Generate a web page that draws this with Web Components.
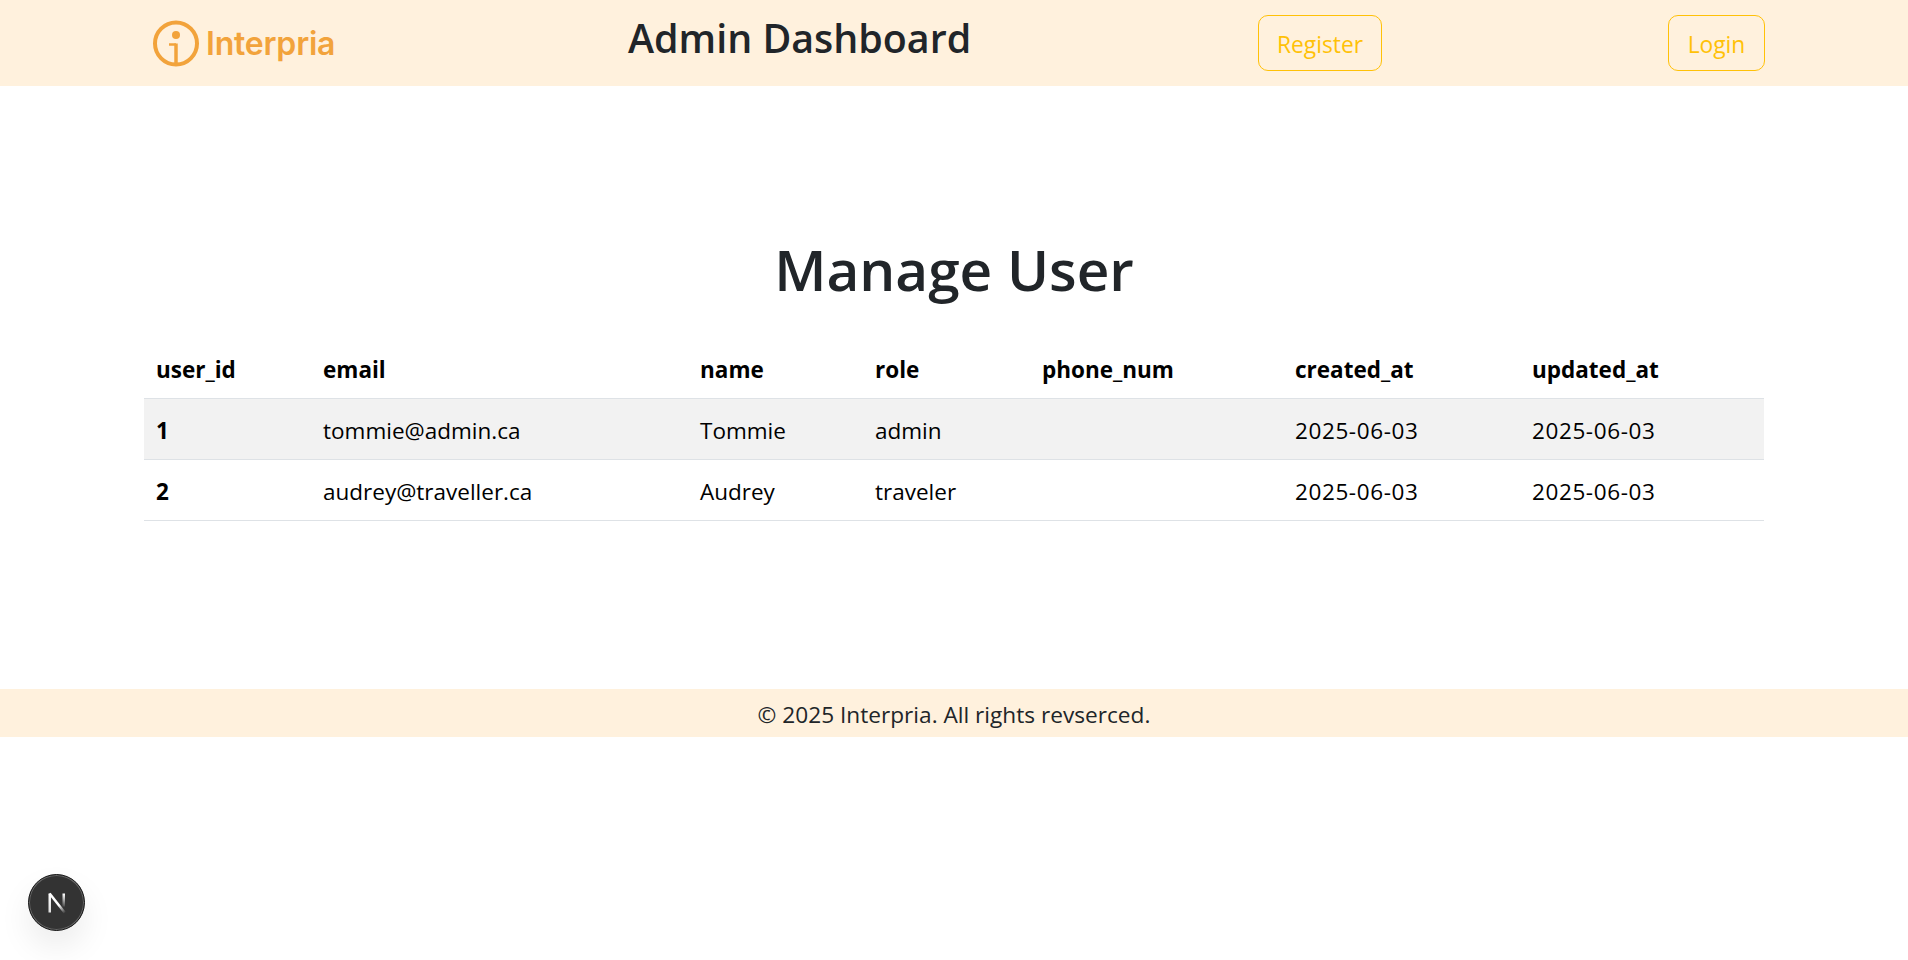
<!DOCTYPE html>
<html>
<head>
<meta charset="utf-8">
<title>Admin Dashboard</title>
<style>
  html, body { margin: 0; background: #fff; }
  body { font-family: "Open Sans", "Noto Sans", sans-serif; color: #212529; }
</style>
</head>
<body>
<app-header></app-header>
<manage-users></manage-users>
<app-footer></app-footer>
<dev-badge></dev-badge>

<script>
class BaseComponent extends HTMLElement {
  constructor() {
    super();
    this.attachShadow({ mode: 'open' });
  }

  connectedCallback() {
    this.render();
  }

  render(template) {
    this.shadowRoot.innerHTML = template;
  }
}

class OutlineButton extends BaseComponent {
  render() {
    super.render(`
      <style>
        :host {
          display: flex;
          align-items: center;
          justify-content: center;
          box-sizing: border-box;
          height: 56px;
          padding: 2px 0 0;
          border: 1px solid #ffc107;
          border-radius: 10px;
          color: #ffc107;
          font-size: 22.800px;
        }
      </style>
      <slot></slot>
    `);
  }
}

class AppHeader extends BaseComponent {
  render() {
    super.render(`
      <style>
        :host {
          display: grid;
          grid-template-columns: 475px 630px 410px 97px;
          align-items: start;
          box-sizing: border-box;
          height: 86px;
          padding: 15px 0 0 153px;
          background: #fff1dd;
        }
        .logo {
          display: flex;
          align-items: center;
          gap: 7px;
          height: 57px;
          color: #f2a33b;
          font-family: Inter, sans-serif;
          font-size: 32px;
          font-weight: 600;
          letter-spacing: -0.2px;
        }
        h1 {
          margin: 0;
          font-size: 39.400px;
          line-height: 47px;
          font-weight: 600;
          white-space: nowrap;
        }
        .register { width: 124px; }
      </style>
      <div class="logo">
        <svg width="46" height="47" viewBox="0 0 46 47" fill="none" stroke="#f2a33b" stroke-width="4">
          <circle cx="23" cy="23.500" r="21"/>
          <circle cx="23" cy="15" r="4" fill="#f2a33b" stroke="none"/>
          <path d="M16 24.500h7" stroke-width="2.500"/>
          <path d="M23 23.500V45" stroke-width="3.500"/>
        </svg>
        <span>Interpria</span>
      </div>
      <h1>Admin Dashboard</h1>
      <outline-button class="register">Register</outline-button>
      <outline-button>Login</outline-button>
    `);
  }
}

const USERS = [
  { user_id: 1, email: 'tommie@admin.ca', name: 'Tommie', role: 'admin', phone_num: '', created_at: '2025-06-03', updated_at: '2025-06-03' },
  { user_id: 2, email: 'audrey@traveller.ca', name: 'Audrey', role: 'traveler', phone_num: '', created_at: '2025-06-03', updated_at: '2025-06-03' },
];
const COLUMNS = ['user_id', 'email', 'name', 'role', 'phone_num', 'created_at', 'updated_at'];
const WIDTHS = [167, 377, 175, 167, 253, 237, 244];

class ManageUsers extends BaseComponent {
  cell(user, column, index) {
    if (index === 0) {
      return `<th>${user[column]}</th>`;
    }
    const date = column.endsWith('_at') ? ' class="date"' : '';
    return `<td${date}>${user[column]}</td>`;
  }

  render() {
    const cols = WIDTHS.map((w) => `<col style="width:${w}px">`).join('');
    const head = COLUMNS.map((c) => `<th>${c}</th>`).join('');
    const rows = USERS.map((user) => {
      const cells = COLUMNS.map((c, i) => this.cell(user, c, i)).join('');
      return `<tr>${cells}</tr>`;
    }).join('');

    super.render(`
      <style>
        :host {
          display: block;
          box-sizing: border-box;
          height: 603px;
          padding: 0 144px;
          color: #000;
        }
        h2 {
          margin: 0;
          padding-top: 146px;
          height: 106px;
          line-height: 75px;
          text-align: center;
          font-size: 56.700px;
          font-weight: 600;
          color: #212529;
        }
        table {
          width: 1620px;
          table-layout: fixed;
          border-collapse: collapse;
          font-size: 22.500px;
        }
        th, td {
          height: 61px;
          padding: 3px 12px 0;
          box-sizing: border-box;
          text-align: left;
          border-bottom: 1px solid #dee2e6;
        }
        thead th { height: 60px; padding-top: 4px; }
        th { font-weight: 700; }
        .date { letter-spacing: 0.6px; }
        tbody tr:nth-child(odd) { background: #f2f2f2; }
      </style>
      <h2>Manage User</h2>
      <table>
        <colgroup>${cols}</colgroup>
        <thead><tr>${head}</tr></thead>
        <tbody>${rows}</tbody>
      </table>
    `);
  }
}

class AppFooter extends BaseComponent {
  render() {
    super.render(`
      <style>
        :host {
          display: block;
          height: 48px;
          line-height: 51px;
          text-align: center;
          background: #fff1dd;
          font-size: 22.650px;
          color: #212529;
        }
      </style>
      © 2025 Interpria. All rights revserced.
    `);
  }
}

class DevBadge extends BaseComponent {
  render() {
    super.render(`
      <style>
        :host {
          position: fixed;
          left: 28px;
          bottom: 29px;
          width: 57px;
          height: 57px;
          box-sizing: border-box;
          display: flex;
          align-items: center;
          justify-content: center;
          border-radius: 50%;
          background: #333;
          border: 1px solid #171717;
          box-shadow: 0 0 0 1px rgba(255,255,255,0.25) inset, 0 16px 32px rgba(0,0,0,0.08);
        }
      </style>
      <svg width="20" height="22" viewBox="0 0 20 22" fill="none">
        <defs>
          <linearGradient id="stem" gradientUnits="userSpaceOnUse" x1="0" y1="1" x2="0" y2="21">
            <stop offset="0" stop-color="#fff"/>
            <stop offset="1" stop-color="#ddd"/>
          </linearGradient>
          <linearGradient id="diag" gradientUnits="userSpaceOnUse" x1="3" y1="2" x2="18" y2="21">
            <stop offset="0" stop-color="#fff"/>
            <stop offset="0.6" stop-color="#fff"/>
            <stop offset="1" stop-color="#fff" stop-opacity="0"/>
          </linearGradient>
          <linearGradient id="right" gradientUnits="userSpaceOnUse" x1="0" y1="2" x2="0" y2="14">
            <stop offset="0" stop-color="#fff"/>
            <stop offset="1" stop-color="#fff" stop-opacity="0.15"/>
          </linearGradient>
        </defs>
        <rect x="1.500" y="1.500" width="2.500" height="19" fill="url(#stem)"/>
        <path d="M2.600 1.500L18 21" stroke="url(#diag)" stroke-width="2.500"/>
        <rect x="15.500" y="1.500" width="2.500" height="13" fill="url(#right)"/>
      </svg>
    `);
  }
}

window.customElements.define('outline-button', OutlineButton);
window.customElements.define('app-header', AppHeader);
window.customElements.define('manage-users', ManageUsers);
window.customElements.define('app-footer', AppFooter);
window.customElements.define('dev-badge', DevBadge);
</script>
</body>
</html>
